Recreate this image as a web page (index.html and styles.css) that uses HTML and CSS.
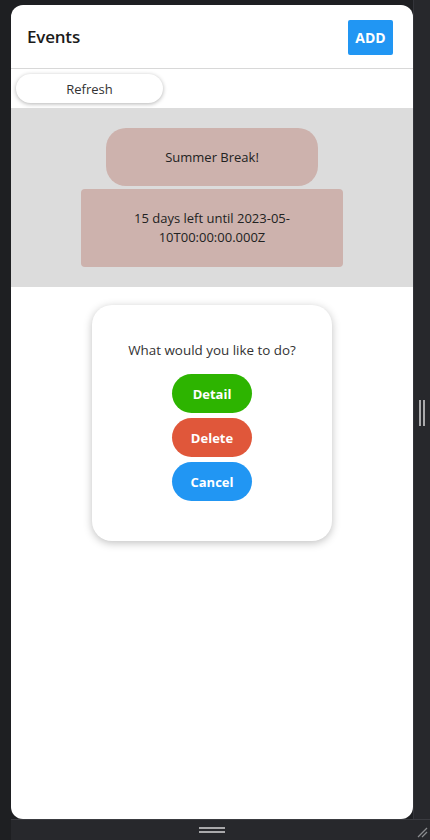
FILE: index.html
```html
<!DOCTYPE html>
<html>
<head>
<meta charset="utf-8">
<link rel="stylesheet" href="styles.css">
</head>
<body>
<div class="shell">
  <div class="frame">
    <header class="header">
      <h1 class="title">Events</h1>
      <button class="add">ADD</button>
    </header>
    <div class="toolbar">
      <button class="refresh">Refresh</button>
    </div>
    <section class="events">
      <div class="event-name">Summer Break!</div>
      <div class="event-date">15 days left until 2023-05-<br>10T00:00:00.000Z</div>
    </section>
    <div class="dialog">
      <p class="dialog-text">What would you like to do?</p>
      <button class="pill detail">Detail</button>
      <button class="pill delete">Delete</button>
      <button class="pill cancel">Cancel</button>
    </div>
  </div>
  <div class="side">
    <span class="vgrip"></span>
  </div>
  <div class="bottom">
    <span class="hgrip"></span>
    <svg class="corner" width="12" height="12" viewBox="0 0 12 12"><path d="M2 11 L11 2 M6 11 L11 6" stroke="#8a8b8e" stroke-width="1.3" fill="none"/></svg>
  </div>
</div>
</body>
</html>
```
FILE: styles.css
```css
* { box-sizing: border-box; }
html, body { margin: 0; padding: 0; }
body {
  background: #1e1f22;
  width: 430px;
  height: 840px;
  overflow: hidden;
  font-family: "Open Sans", "Noto Sans", sans-serif;
}
.shell {
  display: grid;
  grid-template-columns: 11px 402px 17px;
  grid-template-rows: 5px 814px 21px;
  height: 840px;
}
.frame {
  grid-column: 2;
  grid-row: 2;
  background: #fff;
  border-radius: 12px;
  overflow: hidden;
  display: flex;
  flex-direction: column;
}
.side {
  grid-column: 3;
  grid-row: 1 / 3;
  background: #27282c;
  border-left: 1px solid #33343a;
  display: flex;
  align-items: center;
  justify-content: center;
  padding-top: 6px;
}
.vgrip {
  width: 6px;
  height: 26px;
  border-left: 2px solid #a9a9ab;
  border-right: 2px solid #a9a9ab;
}
.bottom {
  grid-column: 2 / 4;
  grid-row: 3;
  background: #27282c;
  border-top: 1px solid #3a3b40;
  display: flex;
  align-items: center;
  justify-content: center;
  padding-right: 17px;
  position: relative;
}
.hgrip {
  width: 26px;
  height: 6px;
  border-top: 2px solid #a9a9ab;
  border-bottom: 2px solid #a9a9ab;
}
.corner {
  position: absolute;
  right: 2px;
  bottom: 2px;
}
.header {
  height: 64px;
  flex: none;
  border-bottom: 1px solid #d8d8d8;
  display: flex;
  align-items: center;
  justify-content: space-between;
  padding: 0 20px 0 16px;
}
.title {
  margin: 0;
  font-size: 17px;
  font-weight: 600;
  color: #1b1b1b;
  letter-spacing: -0.2px;
}
.add {
  width: 45px;
  height: 35px;
  border: none;
  border-radius: 2px;
  background: #2196f3;
  color: #fff;
  font-family: inherit;
  font-weight: 700;
  font-size: 14px;
  padding: 0;
  margin-top: 2px;
}
.toolbar {
  flex: none;
  padding: 5px 0 5px 5px;
}
.refresh {
  display: block;
  width: 147px;
  height: 29px;
  border: none;
  border-radius: 15px;
  background: #fff;
  box-shadow: 0 1px 4px rgba(0,0,0,0.3);
  font-family: inherit;
  font-size: 13px;
  color: #333;
  padding: 0;
}
.events {
  flex: none;
  background: #dcdcdc;
  padding: 20px 0;
  display: flex;
  flex-direction: column;
  align-items: center;
  gap: 3px;
}
.event-name {
  width: 212px;
  height: 58px;
  background: #cdb2ad;
  border-radius: 20px;
  display: flex;
  align-items: center;
  justify-content: center;
  font-size: 13px;
  color: #222;
}
.event-date {
  width: 262px;
  height: 78px;
  background: #cdb2ad;
  border-radius: 4px;
  display: flex;
  align-items: center;
  justify-content: center;
  text-align: center;
  font-size: 13px;
  line-height: 19px;
  color: #222;
}
.dialog {
  flex: none;
  align-self: center;
  width: 240px;
  height: 236px;
  margin-top: 18px;
  background: #fff;
  border-radius: 20px;
  box-shadow: 0 2px 8px rgba(0,0,0,0.25);
  display: flex;
  flex-direction: column;
  align-items: center;
  padding-top: 35px;
}
.dialog-text {
  margin: 0 0 14px;
  font-size: 13.4px;
  line-height: 20px;
  color: #333;
}
.pill {
  width: 80px;
  height: 39px;
  border: none;
  border-radius: 20px;
  color: #fff;
  font-family: inherit;
  font-weight: 700;
  font-size: 13px;
  padding: 0;
  margin-bottom: 5px;
}
.detail { background: #2db400; }
.delete { background: #e0573a; }
.cancel { background: #2196f3; }
```
